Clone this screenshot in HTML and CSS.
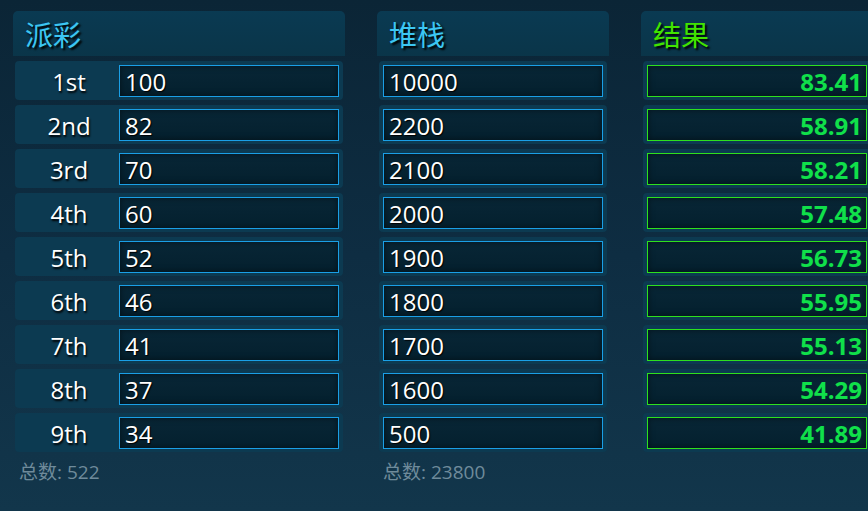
FILE: index.html
```html
<!DOCTYPE html>
<html lang="zh">
<head>
<meta charset="utf-8">
<link rel="stylesheet" href="styles.css">
</head>
<body>
<div class="board">
  <section class="col col-payout">
    <div class="head blue">派彩</div>
    <div class="row"><span class="label">1st</span><div class="field">100</div></div>
    <div class="row"><span class="label">2nd</span><div class="field">82</div></div>
    <div class="row"><span class="label">3rd</span><div class="field">70</div></div>
    <div class="row"><span class="label">4th</span><div class="field">60</div></div>
    <div class="row"><span class="label">5th</span><div class="field">52</div></div>
    <div class="row"><span class="label">6th</span><div class="field">46</div></div>
    <div class="row"><span class="label">7th</span><div class="field">41</div></div>
    <div class="row"><span class="label">8th</span><div class="field">37</div></div>
    <div class="row"><span class="label">9th</span><div class="field">34</div></div>
    <div class="total">总数: 522</div>
  </section>
  <section class="col col-stack">
    <div class="head blue">堆栈</div>
    <div class="row"><div class="field">10000</div></div>
    <div class="row"><div class="field">2200</div></div>
    <div class="row"><div class="field">2100</div></div>
    <div class="row"><div class="field">2000</div></div>
    <div class="row"><div class="field">1900</div></div>
    <div class="row"><div class="field">1800</div></div>
    <div class="row"><div class="field">1700</div></div>
    <div class="row"><div class="field">1600</div></div>
    <div class="row"><div class="field">500</div></div>
    <div class="total">总数: 23800</div>
  </section>
  <section class="col col-result">
    <div class="head green">结果</div>
    <div class="row"><div class="field result">83.41</div></div>
    <div class="row"><div class="field result">58.91</div></div>
    <div class="row"><div class="field result">58.21</div></div>
    <div class="row"><div class="field result">57.48</div></div>
    <div class="row"><div class="field result">56.73</div></div>
    <div class="row"><div class="field result">55.95</div></div>
    <div class="row"><div class="field result">55.13</div></div>
    <div class="row"><div class="field result">54.29</div></div>
    <div class="row"><div class="field result">41.89</div></div>
  </section>
</div>
</body>
</html>
```
FILE: styles.css
```css
html, body {
  margin: 0;
  padding: 0;
  height: 100%;
  overflow: hidden;
}
body {
  background: linear-gradient(180deg, #0b2536 0%, #0e2d42 50%, #12364b 100%);
  font-family: "Open Sans", "Noto Sans CJK SC", sans-serif;
  color: #fff;
}
.board {
  display: flex;
  gap: 32px;
  padding: 11px 0 0 13px;
  box-sizing: border-box;
  width: 100%;
}
.col {
  display: flex;
  flex-direction: column;
  gap: 5px;
}
.col-payout { width: 332px; }
.col-stack { width: 232px; }
.col-result { flex: 1; min-width: 0; }
.head {
  height: 45px;
  background: linear-gradient(180deg, #0a3a52 0%, #0a3549 100%);
  border-radius: 5px 5px 0 0;
  font-family: "Noto Sans CJK SC", sans-serif;
  font-size: 28px;
  line-height: 46px;
  padding-left: 12px;
  text-shadow: 2px 2px 2px #000;
}
.col-result .head { border-radius: 5px 0 0 0; }
.head.blue { color: #3cc6f2; }
.head.green { color: #41e300; }
.row {
  display: flex;
  align-items: center;
  height: 39px;
  margin: 0 2px;
  padding: 4px 4px 3px 4px;
  box-sizing: border-box;
  background: #0c3a51;
  border-radius: 4px;
}
.col-result .row {
  margin-right: 0;
  padding-right: 1px;
  border-radius: 4px 0 0 4px;
}
.label {
  width: 100px;
  text-align: center;
  font-size: 24px;
  text-shadow: 1px 2px 2px #000;
}
.field {
  flex: 1;
  height: 32px;
  box-sizing: border-box;
  border: 1px solid #1a9fe6;
  background: linear-gradient(180deg, #082636 0%, #04202e 100%);
  box-shadow: inset 0 0 6px rgba(0,0,0,0.5);
  font-size: 24px;
  line-height: 31px;
  padding-left: 5px;
  text-shadow: 1px 1px 1px #000;
}
.field.result {
  border-color: #2ee01e;
  color: #10e04a;
  font-weight: 700;
  text-align: right;
  padding-right: 4px;
  text-shadow: none;
}
.total {
  margin-top: 2px;
  padding-left: 6px;
  font-size: 19px;
  line-height: 26px;
  color: #6f8b9b;
  font-family: "Open Sans", "Noto Sans CJK SC", sans-serif;
}
```
